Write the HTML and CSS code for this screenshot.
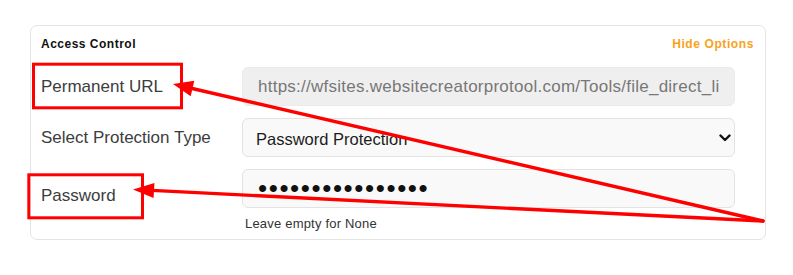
FILE: index.html
```html
<!DOCTYPE html>
<html lang="en">
<head>
<meta charset="utf-8">
<title>Access Control</title>
<link rel="stylesheet" href="styles.css">
</head>
<body>
<div class="page">
  <section class="card">
    <div class="card-head">
      <h3 class="card-title">Access Control</h3>
      <a class="toggle" href="#">Hide Options</a>
    </div>
    <div class="form">
      <label class="lbl">Permanent URL</label>
      <input class="field field-ro" type="text" readonly value="https://wfsites.websitecreatorprotool.com/Tools/file_direct_link?id=1028">

      <label class="lbl">Select Protection Type</label>
      <div class="select-wrap">
        <select class="field field-select">
          <option>Password Protection</option>
        </select>
        <svg class="chev" width="12" height="8" viewBox="0 0 12 8"><path d="M1.5 1.5 L6 6 L10.5 1.5" fill="none" stroke="#111" stroke-width="2.4" stroke-linecap="round" stroke-linejoin="round"/></svg>
      </div>

      <label class="lbl lbl-pw">Password</label>
      <div class="pw-col">
        <input class="field field-pw" type="password" value="secretpassword12">
        <div class="help">Leave empty for None</div>
      </div>
    </div>
  </section>

  <svg class="annot" width="793" height="275" viewBox="0 0 793 275">
    <rect x="33.5" y="64.2" width="148" height="43.6" fill="none" stroke="#ff0000" stroke-width="3"/>
    <rect x="28.8" y="174.8" width="113.7" height="43" fill="none" stroke="#ff0000" stroke-width="3"/>
    <line x1="763" y1="221" x2="190" y2="88" stroke="#ff0000" stroke-width="3.4" stroke-linecap="round"/>
    <polygon points="173,84 194.3,80.7 190.7,96.3" fill="#ff0000"/>
    <line x1="763" y1="221" x2="152" y2="190.4" stroke="#ff0000" stroke-width="3.4" stroke-linecap="round"/>
    <polygon points="133,189.5 154.4,183 153.6,198" fill="#ff0000"/>
  </svg>
</div>
</body>
</html>
```

FILE: styles.css
```css
* { box-sizing: border-box; }

html, body {
  margin: 0;
  background: #ffffff;
}

body {
  font-family: "Liberation Sans", Arial, Helvetica, sans-serif;
  color: #333;
}

.page {
  position: relative;
  width: 793px;
  height: 275px;
  padding: 25px 0 0 30px;
}

.card {
  width: 736px;
  border: 1px solid #e4e4e4;
  border-radius: 7px;
  padding: 10px 11px 7px 10px;
  background: #fff;
}

.card-head {
  display: flex;
  justify-content: space-between;
  align-items: baseline;
  margin-bottom: 15px;
}

.card-title {
  margin: 0;
  font-size: 12px;
  line-height: 16px;
  font-weight: bold;
  letter-spacing: 0.5px;
  color: #111;
}

.toggle {
  font-size: 12px;
  line-height: 16px;
  font-weight: bold;
  letter-spacing: 0.6px;
  color: #f8a21b;
  text-decoration: none;
}

.form {
  display: grid;
  grid-template-columns: 201px 493px;
  row-gap: 12px;
  align-items: start;
}

.lbl {
  font-size: 17px;
  line-height: 39px;
  color: #3d3d3d;
  white-space: nowrap;
}

.lbl-pw {
  padding-top: 7px;
}

.field {
  display: block;
  width: 493px;
  height: 39px;
  margin: 0;
  border: 1px solid #e3e3e3;
  border-radius: 6px;
  background: #f9f9f9;
  font-family: "Liberation Sans", Arial, Helvetica, sans-serif;
  outline: none;
}

.field-ro {
  background: #efefef;
  border-color: #ebebeb;
  padding: 0 14px 0 15px;
  font-size: 17px;
  letter-spacing: 0.25px;
  color: #777;
}

.select-wrap {
  position: relative;
}

.field-select {
  -webkit-appearance: none;
  appearance: none;
  padding: 3px 30px 0 13px;
  font-size: 16.5px;
  color: #1c1c1c;
}

.chev {
  position: absolute;
  left: 477px;
  top: 16px;
}

.field-pw {
  padding: 0 12px 0 15px;
  font-size: 26px;
  letter-spacing: 1.6px;
  color: #111;
}

.help {
  margin-top: 8px;
  padding-left: 3px;
  font-size: 13px;
  line-height: 16px;
  letter-spacing: 0.2px;
  color: #333;
}

.annot {
  position: absolute;
  left: 0;
  top: 0;
  pointer-events: none;
}
```
